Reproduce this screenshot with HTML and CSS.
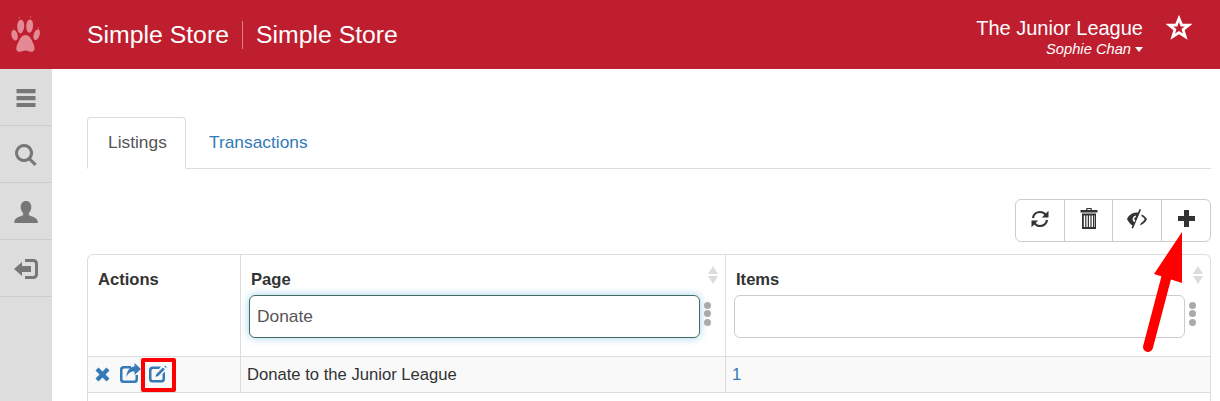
FILE: index.html
```html
<!DOCTYPE html>
<html lang="en">
<head>
<meta charset="utf-8">
<title>Simple Store</title>
<link rel="stylesheet" href="styles.css">
</head>
<body>
<header class="topbar">
  <div class="logo">
    <svg class="paw" viewBox="0 0 60 70" width="60" height="70">
      <path d="M17.2 26.6c0-4 1.8-7.100 4-6.800s3.500 3.900 2.900 7.500c-.6 3.700-2.200 6.500-4 6.100-1.800-.4-2.900-3-2.900-6.800z"/>
      <path d="M26.300 25.800c.2-3.700 1.900-6.600 3.900-6.300 2 .3 3.300 3.200 2.800 7-.4 3.600-2 6.500-3.800 6.200-1.900-.3-3.100-3.300-2.900-6.900z"/>
      <path d="M33.800 34c.8-3 2.800-5.300 4.500-4.800 1.700.6 2.100 3.300 1.200 6.200-.9 2.900-2.800 5-4.500 4.500-1.700-.6-2-3-1.200-5.900z"/>
      <path d="M11.500 35.500c-.5-3 .4-5.300 2.100-5.400 1.700-.2 3.400 1.900 4 4.800.6 2.900-.2 5.400-1.900 5.600-1.700.2-3.700-2-4.200-5z"/>
      <path d="M25.600 34.900c3.200 0 5.400 3.100 6.600 6.300 1.200 3 2.700 5 2.300 7.800-.4 2.600-2.500 3.200-4.400 2.700-1.800-.5-3-1.200-4.700-1.200-1.600 0-3.100.8-5 1.200-2.100.4-3.900-.4-4.100-3-.2-2.700 1.400-4.700 2.600-7.700 1.300-3.200 3.600-6.100 6.700-6.100z"/>
      <path d="M18.600 18.500l.5-2 .5 2zM29.800 17.500l.5-2.200.5 2.200zM38.100 28.500l.6-2 .4 2zM13.700 29l-.2-1.800.8 1.800z"/>
    </svg>
  </div>
  <div class="brand">
    <span class="brand-name">Simple Store</span>
    <span class="brand-name brand-sub">Simple Store</span>
  </div>
  <div class="account">
    <div class="org">The Junior League</div>
    <div class="user">Sophie Chan<span class="caret"></span></div>
  </div>
  <svg class="star" viewBox="0 0 26 25" width="26" height="25"><path d="M13 3.400l2.700 6.700h7.100l-5.700 4.500 2.100 7-6.200-4.100-6.200 4.100 2.100-7-5.700-4.500h7.100z"/></svg>
</header>

<div class="shell">
  <nav class="sidebar">
    <a class="side-item"><svg viewBox="0 0 20 18" width="20" height="18"><path d="M.5 0h19v4.200H.500zM.5 7h19v4.200H.500zM.5 14h19v4H.500z"/></svg></a>
    <a class="side-item"><svg viewBox="0 0 22 22" width="22" height="22"><path d="M9 0a9 9 0 0 1 7.200 14.400l5.500 5.300-2.300 2.300-5.400-5.500A9 9 0 1 1 9 0zm0 3a6 6 0 1 0 0 12A6 6 0 0 0 9 3z"/></svg></a>
    <a class="side-item"><svg viewBox="0 0 24 22" width="24" height="22"><path d="M12 0c3.400 0 5.300 2.600 5.300 6 0 2.600-1.100 5-2.500 6.200v1.800c1.700 1.400 8 2.200 8.900 6.200V22H.3v-1.800c.9-4 7.200-4.800 8.900-6.200v-1.800C7.800 11 6.700 8.600 6.700 6 6.700 2.600 8.600 0 12 0z"/></svg></a>
    <a class="side-item"><svg viewBox="0 0 24 20" width="24" height="20"><path d="M11 0h8.500A4.500 4.500 0 0 1 24 4.500v11a4.500 4.500 0 0 1-4.500 4.500H11v-3h8a2 2 0 0 0 2-2V5a2 2 0 0 0-2-2h-8z"/><path d="M0 10l8-7v4h9v6H8v4z"/></svg></a>
  </nav>

  <main class="content">
    <ul class="tabs">
      <li class="tab tab-active">Listings</li>
      <li class="tab tab-link">Transactions</li>
    </ul>

    <div class="toolbar-row">
      <div class="toolbar">
        <button class="tool tool-a"><svg class="ico-refresh" viewBox="0 0 18 18" width="18" height="18"><path class="arc" d="M2 8C2.500 4.500 5.500 2 9 2c2.200 0 4.200 1 5.500 2.700"/><path d="M17.500 .8v6.700h-6.700z"/><path class="arc" d="M16 10c-.5 3.500-3.500 6-7 6-2.200 0-4.200-1-5.500-2.700"/><path d="M.5 17.200v-6.700h6.700z"/></svg></button>
        <button class="tool tool-a"><svg viewBox="0 0 18 21" width="18" height="21"><path fill-rule="evenodd" d="M6.500 0h5l.5 2h5.500v2.500H.5V2H6zM7.500 1l-.2 1h3.400l-.2-1z"/><path fill-rule="evenodd" d="M2 5.500h14V21H2zM3.800 7.500v11.500h1.400V7.500zM6.400 7.500v11.500h1.400V7.500zM9 7.500v11.500h1.400V7.500zM11.600 7.500v11.500H13V7.500zM14 7.500v11.500h.6V7.500z"/></svg></button>
        <button class="tool tool-b"><svg viewBox="0 0 20 20" width="20" height="20"><path fill-rule="evenodd" d="M12.500 0l1.500.8L6 19.500l-1.500-.8 1-2.200C3 15 1 12.300 0 10c1.500-3.300 5-6.500 9.500-6.500.6 0 1.100 0 1.500.1zM8.800 6.500A3.800 3.800 0 0 0 5.700 11c.3 1 1 1.800 1.800 2.300l.8-1.900c-.7-.4-1.100-1.100-1-1.800.1-.9.800-1.600 1.700-1.700z"/><path d="M14.500 5.500c2.400 1 4.400 2.600 5.500 4.500-1 2.500-3.500 5.300-7 6.400l1-2.300c1.800-1 3-2.600 3.700-4.100-.7-1-1.800-2.100-3.200-2.800z"/></svg></button>
        <button class="tool tool-b"><svg viewBox="0 0 17 17" width="17" height="17"><path d="M6 0h5v6h6v5h-6v6H6v-6H0V6h6z"/></svg></button>
      </div>
    </div>

    <div class="grid-wrap">
      <table class="grid">
        <colgroup><col class="col-actions"><col class="col-data"><col class="col-data"></colgroup>
        <thead>
          <tr>
            <th class="head-actions">Actions</th>
            <th class="head-filter">
              <div class="head-label">Page</div>
              <div class="filter-row"><input class="filter filter-focus" type="text" value="Donate"><span class="dots"><i></i><i></i><i></i></span></div>
              <span class="sort"></span>
            </th>
            <th class="head-filter">
              <div class="head-label">Items</div>
              <div class="filter-row"><input class="filter" type="text" value=""><span class="dots"><i></i><i></i><i></i></span></div>
              <span class="sort"></span>
            </th>
          </tr>
        </thead>
        <tbody>
          <tr class="row">
            <td class="cell-actions">
              <div class="actions">
                <svg class="act-x" viewBox="0 0 15 15" width="15" height="15"><path d="M3.500.5l4 4 4-4 3 3-4 4 4 4-3 3-4-4-4 4-3-3 4-4-4-4z"/></svg>
                <svg class="act-share" viewBox="0 0 21 20" width="21" height="20"><path d="M3.500 3H11v2.500H4a1.500 1.500 0 0 0-1.500 1.500v9A1.500 1.500 0 0 0 4 17.500h10a1.500 1.500 0 0 0 1.500-1.500v-4H18v4.500a3.500 3.500 0 0 1-3.500 3.500h-11A3.500 3.500 0 0 1 0 16.500V6.500A3.500 3.500 0 0 1 3.500 3z"/><path d="M14.500 0L21 6l-6.500 6V8.500C10 8.500 8 10.500 6.500 14c0-6 3-10 8-10.500z"/></svg>
                <svg class="act-edit" viewBox="0 0 18 18" width="18" height="18"><path d="M3.500 1.500H12L10 4H4a1.500 1.500 0 0 0-1.500 1.500v8A1.500 1.500 0 0 0 4 15h8a1.500 1.500 0 0 0 1.500-1.500V9L16 6.500v7.500a3.500 3.500 0 0 1-3.500 3.500h-9A3.500 3.500 0 0 1 0 14V5A3.500 3.500 0 0 1 3.500 1.500z"/><path d="M14 2.500L15.800 4.300 9 11.200 6.500 11.800 7.200 9.200zM15.200 1.200L16 .4 17.800 2.200 17 3z"/></svg>
              </div>
            </td>
            <td class="cell-text">Donate to the Junior League</td>
            <td class="cell-text cell-link">1</td>
          </tr>
        </tbody>
      </table>
    </div>
  </main>
</div>

<span class="mark-box"></span>
<svg class="mark-arrow" viewBox="0 0 80 130" width="80" height="130">
  <path class="arrow-shaft" d="M38 40L18 116"/>
  <path class="arrow-head" d="M52 1L24 43 52 52z"/>
</svg>
</body>
</html>
```

FILE: styles.css
```css
* { box-sizing: border-box; }

html, body {
  margin: 0;
  height: 401px;
  overflow: hidden;
  background: #fff;
  font-family: "Liberation Sans", Arial, sans-serif;
  color: #333;
}

body { position: relative; }

.topbar {
  display: flex;
  align-items: center;
  height: 69px;
  background: #be1e2e;
  color: #fff;
}

.logo { width: 52px; height: 69px; flex: none; }
.paw { display: block; width: 60px; height: 70px; fill: #e48a95; }

.brand {
  display: flex;
  align-items: center;
  flex: 1;
  padding-left: 35px;
}

.brand-name { font-size: 24.800px; line-height: 28px; }

.brand-sub {
  margin-left: 13px;
  padding-left: 13px;
  border-left: 1px solid #dc7f89;
}

.account { align-self: flex-start; padding-top: 16px; text-align: right; }
.org { font-size: 20px; line-height: 24px; }
.user { font-size: 14.700px; font-style: italic; line-height: 19px; }

.caret {
  display: inline-block;
  margin-left: 4px;
  vertical-align: 2px;
  border-top: 5px solid #fff;
  border-left: 4.500px solid transparent;
  border-right: 4.500px solid transparent;
}

.star {
  flex: none;
  margin: 0 28px 15px 23px;
  fill: none;
  stroke: #fff;
  stroke-width: 2.700;
}

.shell { display: flex; height: 332px; }

.sidebar { width: 52px; flex: none; background: #ddd; }

.side-item {
  display: flex;
  align-items: center;
  justify-content: center;
  height: 57px;
  border-bottom: 1px solid #ccc;
  padding-top: 2px;
}

.side-item svg { fill: #777; }

.content {
  flex: 1;
  min-width: 0;
  padding: 48px 9px 0 35px;
}

.tabs {
  display: flex;
  margin: 0;
  padding: 0;
  list-style: none;
  height: 52px;
  border-bottom: 1px solid #ddd;
}

.tab {
  height: 52px;
  padding: 0 20px;
  font-size: 17.350px;
  line-height: 49px;
  border: 1px solid transparent;
  border-radius: 4px 4px 0 0;
}

.tab-active {
  width: 99px;
  color: #555;
  background: #fff;
  border-color: #ddd #ddd #fff;
}

.tab-link { margin-left: 2px; color: #337ab7; }

.toolbar-row {
  display: flex;
  justify-content: flex-end;
  margin: 30px 0 12px;
}

.toolbar {
  display: flex;
  height: 43px;
  border: 1px solid #ccc;
  border-radius: 6px;
  background: #fff;
}

.tool {
  display: flex;
  align-items: center;
  justify-content: center;
  padding: 0 0 4px;
  border: 0;
  border-left: 1px solid #ccc;
  background: none;
}

.tool-a { width: 48px; }
.tool-b { width: 49px; }
.tool:first-child { border-left: 0; }
.tool svg { fill: #333; }
.tool .arc { fill: none; stroke: #333; stroke-width: 2.200; }

.grid-wrap {
  height: 160px;
  border: 1px solid #ddd;
  border-bottom: 0;
  border-radius: 6px 6px 0 0;
}

.grid {
  width: 1122px;
  table-layout: fixed;
  border-collapse: separate;
  border-spacing: 0;
}

.col-actions { width: 152px; }
.col-data { width: 485px; }

.grid th, .grid td { padding: 0; text-align: left; vertical-align: top; }

.grid th {
  height: 102px;
  font-size: 16.600px;
  font-weight: 700;
  color: #333;
  border-bottom: 1px solid #ddd;
}

.grid th + th, .grid td + td { border-left: 1px solid #ddd; }

.head-actions { padding: 13px 0 0 10px !important; line-height: 23px; }

.head-filter { position: relative; padding: 13px 8px 0 !important; }

.head-label { height: 27px; padding-left: 2px; line-height: 23px; }

.filter-row { display: flex; align-items: flex-start; }

.filter {
  width: 451px;
  height: 43px;
  padding: 0 7px;
  flex: none;
  font: 17.350px "Liberation Sans", Arial, sans-serif;
  color: #555;
  background: #fff;
  border: 1px solid #ccc;
  border-radius: 6px;
  outline: 0;
}

.filter-focus {
  border-color: #3f6f5c;
  box-shadow: 0 0 8px rgba(102, 175, 233, .6);
}

.dots {
  display: flex;
  flex-direction: column;
  gap: 1.300px;
  margin: 7px 0 0 4px;
}

.dots i {
  display: block;
  width: 7px;
  height: 7px;
  border-radius: 50%;
  background: #aaa;
}

.sort {
  position: absolute;
  top: 11px;
  right: 6px;
  width: 11px;
  height: 19px;
}

.sort::before, .sort::after {
  content: "";
  position: absolute;
  left: 0;
  border-left: 5.500px solid transparent;
  border-right: 5.500px solid transparent;
}

.sort::before { top: 0; border-bottom: 8px solid #dcdcdc; }
.sort::after { top: 10px; border-top: 8px solid #dcdcdc; }

.row td {
  height: 36px;
  background: #f9f9f9;
  border-bottom: 1px solid #ddd;
}

.cell-text { padding: 0 0 0 6px !important; font-size: 16.640px; line-height: 34px; vertical-align: middle !important; }
.cell-link { color: #337ab7; }

.actions { display: flex; align-items: center; height: 35px; padding-left: 7px; }
.actions svg { display: block; flex: none; fill: #337ab7; }
.act-x { margin-top: 0; }
.act-share { margin: -3px 0 0 10px; }
.act-edit { margin: -2px 0 0 8px; }

.mark-box {
  position: absolute;
  left: 141px;
  top: 358px;
  width: 35px;
  height: 34px;
  border: 4px solid #f00;
  border-radius: 2px;
}

.mark-arrow {
  position: absolute;
  left: 1130px;
  top: 231px;
}

.arrow-shaft { fill: none; stroke: #f00; stroke-width: 10; stroke-linecap: round; }
.arrow-head { fill: #f00; }
```
